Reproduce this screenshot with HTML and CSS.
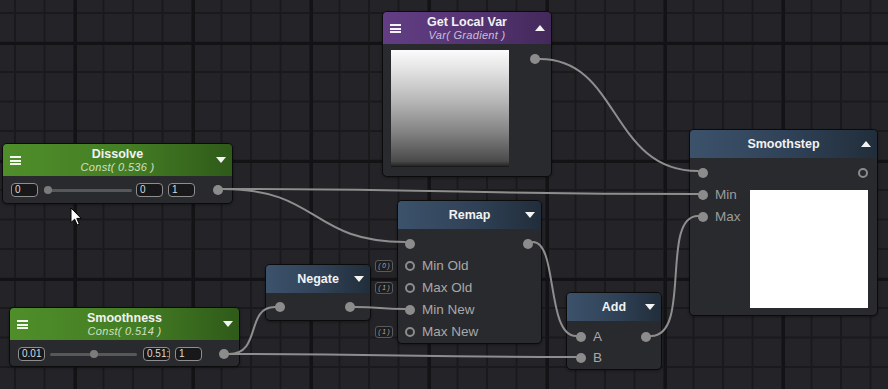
FILE: index.html
```html
<!DOCTYPE html>
<html>
<head>
<meta charset="utf-8">
<link rel="stylesheet" href="styles.css">
</head>
<body>
<div class="canvas">

  <div class="node n-glv">
    <div class="head purple tall">
      <span class="menu"></span>
      <div class="titles"><div class="title">Get Local Var</div><div class="sub sub-purple">Var( Gradient )</div></div>
      <span class="tri up"></span>
    </div>
    <div class="glv-body">
      <div class="gradient"></div>
      <span class="port glv-port"></span>
    </div>
  </div>

  <div class="node n-dissolve">
    <div class="head green tall">
      <span class="menu"></span>
      <div class="titles"><div class="title">Dissolve</div><div class="sub sub-green">Const( 0.536 )</div></div>
      <span class="tri"></span>
    </div>
    <div class="const-row dissolve-row">
      <span class="num">0</span>
      <span class="slider s-dissolve"><span class="knob" style="left:0px"></span></span>
      <span class="num">0</span>
      <span class="num num-gap">1</span>
      <span class="port out"></span>
    </div>
  </div>

  <div class="node n-smooth">
    <div class="head green tall">
      <span class="menu"></span>
      <div class="titles"><div class="title">Smoothness</div><div class="sub sub-green">Const( 0.514 )</div></div>
      <span class="tri"></span>
    </div>
    <div class="const-row smooth-row">
      <span class="num">0.01</span>
      <span class="slider s-smooth"><span class="knob" style="left:40px"></span></span>
      <span class="num">0.51:</span>
      <span class="num num-gap">1</span>
      <span class="port out"></span>
    </div>
  </div>

  <div class="node n-remap">
    <div class="head blue">
      <span></span>
      <div class="titles"><div class="title">Remap</div></div>
      <span class="tri"></span>
    </div>
    <div class="rows remap-rows">
      <div class="row"><span class="port"></span><span class="port out"></span></div>
      <div class="row"><span class="tag">( 0 )</span><span class="port hollow"></span><span class="label">Min Old</span></div>
      <div class="row"><span class="tag">( 1 )</span><span class="port hollow"></span><span class="label">Max Old</span></div>
      <div class="row"><span class="port"></span><span class="label">Min New</span></div>
      <div class="row"><span class="tag">( 1 )</span><span class="port hollow"></span><span class="label">Max New</span></div>
    </div>
  </div>

  <div class="node n-negate">
    <div class="head blue">
      <span></span>
      <div class="titles"><div class="title">Negate</div></div>
      <span class="tri"></span>
    </div>
    <div class="rows negate-rows">
      <div class="row"><span class="port"></span><span class="port out"></span></div>
    </div>
  </div>

  <div class="node n-add">
    <div class="head blue">
      <span></span>
      <div class="titles"><div class="title">Add</div></div>
      <span class="tri"></span>
    </div>
    <div class="rows add-rows">
      <div class="row"><span class="port"></span><span class="label">A</span><span class="port out"></span></div>
      <div class="row"><span class="port"></span><span class="label">B</span></div>
    </div>
  </div>

  <div class="node n-step">
    <div class="head blue">
      <span></span>
      <div class="titles"><div class="title">Smoothstep</div></div>
      <span class="tri up"></span>
    </div>
    <div class="rows step-rows">
      <div class="row"><span class="port"></span><span class="port hollow out"></span></div>
      <div class="step-main">
        <div class="step-inputs">
          <div class="row"><span class="port"></span><span class="label dim">Min</span></div>
          <div class="row"><span class="port"></span><span class="label dim">Max</span></div>
        </div>
        <div class="white-preview"></div>
      </div>
    </div>
  </div>

  <svg class="wires" width="888" height="389" viewBox="0 0 888 389">
    <path d="M540 59 C620 59, 610 171, 698 171"/>
    <path d="M223 189 C460 189, 460 194, 698 194"/>
    <path d="M223 189 C320 189, 310 242, 405 242"/>
    <path d="M533 242 C558 242, 546 336, 576 336"/>
    <path d="M651 336 C692 336, 660 216, 698 216"/>
    <path d="M355 307 C380 307, 380 309, 405 309"/>
    <path d="M229 354 C262 354, 245 307, 275 307"/>
    <path d="M229 354 C400 354, 400 357, 576 357"/>
  </svg>

  <svg class="cursor" width="12" height="19" viewBox="0 0 12 19">
    <path d="M1 1 L1 15.5 L4.6 12.2 L7.2 18 L9.3 17.1 L6.8 11.4 L11.2 11.4 Z" fill="#fff" stroke="#000" stroke-width="1"/>
  </svg>

</div>
</body>
</html>
```

FILE: styles.css
```css
* { box-sizing: border-box; }

html, body {
  margin: 0;
  padding: 0;
  background: #232327;
}

body {
  font-family: "Liberation Sans", Arial, sans-serif;
}

.canvas {
  position: relative;
  width: 888px;
  height: 389px;
  overflow: hidden;
  background-color: #242428;
  background-image:
    linear-gradient(to right, #131315 3px, transparent 3px),
    linear-gradient(to bottom, #131315 3px, transparent 3px),
    linear-gradient(to right, #1a1a1d 2px, transparent 2px),
    linear-gradient(to bottom, #1a1a1d 2px, transparent 2px);
  background-size: 118px 100%, 100% 118px, 29.5px 100%, 100% 29.5px;
  background-position: 74px 0, 0 42px, 14px 0, 0 12px;
}

/* ---------- nodes ---------- */
.node {
  position: absolute;
  z-index: 1;
  background: #292a2e;
  border: 1px solid #0b0b0c;
  border-radius: 5px;
  box-shadow: 0 1px 3px rgba(0,0,0,0.35);
}

.n-glv      { left: 382px; top: 11px;  width: 170px; height: 166px; }
.n-dissolve { left: 2px;   top: 143px; width: 231px; height: 61px; }
.n-smooth   { left: 9px;   top: 307px; width: 231px; height: 60px; }
.n-remap    { left: 397px; top: 200px; width: 145px; height: 144px; }
.n-negate   { left: 265px; top: 264px; width: 106px; height: 57px; }
.n-add      { left: 566px; top: 292px; width: 96px;  height: 78px; }
.n-step     { left: 689px; top: 129px; width: 189px; height: 187px; }

.head {
  height: 28px;
  border-radius: 4px 4px 0 0;
  display: grid;
  grid-template-columns: 12px 1fr 12px;
  align-items: center;
  padding: 0 6px;
}
.head.tall { height: 32px; }

.purple { background: linear-gradient(to right, #623d84 0%, #553472 55%, #43295a 100%); }
.green  { background: linear-gradient(to right, #4f8e2a 0%, #447d24 55%, #2f5a19 100%); }
.blue   { background: linear-gradient(to right, #3c526b 0%, #2f4156 55%, #212d3a 100%); }

.titles { text-align: center; color: #f2f2f2; }
.title {
  font-size: 12.5px;
  font-weight: bold;
  line-height: 13px;
}
.sub {
  font-size: 11px;
  font-style: italic;
  line-height: 12px;
  letter-spacing: 0.3px;
}
.sub-purple { color: #cdbfd9; }
.sub-green  { color: #cfe0c2; }

.menu {
  width: 11px;
  height: 9px;
  justify-self: start;
  margin-left: 1px;
  background: linear-gradient(to bottom,
    #f4f4f4 0 2px, transparent 2px 3.5px,
    #f4f4f4 3.5px 5.5px, transparent 5.5px 7px,
    #f4f4f4 7px 9px);
}

.tri {
  justify-self: end;
  width: 0;
  height: 0;
  border-left: 5px solid transparent;
  border-right: 5px solid transparent;
  border-top: 6px solid #f4f4f4;
}
.tri.up {
  border-top: none;
  border-bottom: 6px solid #f4f4f4;
}

/* ---------- ports ---------- */
.port {
  flex: none;
  width: 10px;
  height: 10px;
  border-radius: 50%;
  background: #8c8c8c;
}
.port.hollow {
  background: transparent;
  border: 2px solid #8c8c8c;
}
.port.out { margin-left: auto; }

/* ---------- Get Local Var ---------- */
.glv-body {
  display: flex;
  align-items: flex-start;
  padding: 6px 11px 0 8px;
}
.gradient {
  width: 118px;
  height: 117px;
  background: linear-gradient(to bottom, #fcfcfc 0%, #dedede 20%, #b4b4b4 45%, #838383 70%, #4a4a4a 95%, #262626 99%, #111 100%);
}
.glv-port { margin-left: auto; margin-top: 4px; }

/* ---------- constant nodes ---------- */
.const-row {
  display: flex;
  align-items: center;
  height: 27px;
}
.dissolve-row { padding: 0 9px 0 8px; }
.smooth-row   { padding: 0 10px 0 8px; }

.num {
  flex: none;
  width: 27px;
  height: 14px;
  border: 1px solid #8e8e8e;
  border-radius: 4px;
  background: #18181b;
  color: #dadada;
  font-size: 10px;
  line-height: 12px;
  padding-left: 3px;
  white-space: nowrap;
}
.num-gap { margin-left: 5px; }

.slider {
  position: relative;
  flex: none;
  height: 14px;
}
.slider::before {
  content: "";
  position: absolute;
  left: 0;
  right: 0;
  top: 6px;
  height: 3px;
  border-radius: 2px;
  background: #58585a;
}
.s-dissolve { width: 88px; margin: 0 4px 0 6px; }
.s-smooth   { width: 87px; margin: 0 6px 0 5px; }

.knob {
  position: absolute;
  top: 3px;
  width: 8px;
  height: 8px;
  border-radius: 50%;
  background: #7b7b7b;
}

/* ---------- port rows ---------- */
.remap-rows { padding: 4px 8px 0 7px; }
.negate-rows { padding: 3px 15px 0 9px; }
.add-rows { padding: 5px 10px 0 9px; }
.step-rows { padding: 4px 9px 0 8px; }

.row {
  position: relative;
  height: 22px;
  display: flex;
  align-items: center;
  gap: 7px;
}
.add-rows .row { height: 21px; }
.label {
  color: #a8a8a8;
  font-size: 13.5px;
  line-height: 16px;
  white-space: nowrap;
}
.label.dim { color: #9c9c9c; }

.tag {
  position: absolute;
  left: -30px;
  top: 5px;
  width: 18px;
  height: 12px;
  border: 1px solid #5a5a5c;
  border-radius: 3px;
  background: #1d1d20;
  color: #b0b0b0;
  font-size: 6.5px;
  font-style: italic;
  line-height: 10px;
  text-align: center;
  white-space: nowrap;
}

.step-main {
  display: flex;
  justify-content: space-between;
}
.step-inputs { width: 50px; }
.white-preview {
  width: 118px;
  height: 118px;
  margin-top: 6px;
  background: #ffffff;
}

/* ---------- overlays ---------- */
.wires {
  position: absolute;
  left: 0;
  top: 0;
  z-index: 2;
  pointer-events: none;
}
.wires path {
  fill: none;
  stroke: #8e8e8e;
  stroke-width: 2;
  stroke-linecap: round;
}

.cursor {
  position: absolute;
  left: 70px;
  top: 207px;
  z-index: 3;
}
```
